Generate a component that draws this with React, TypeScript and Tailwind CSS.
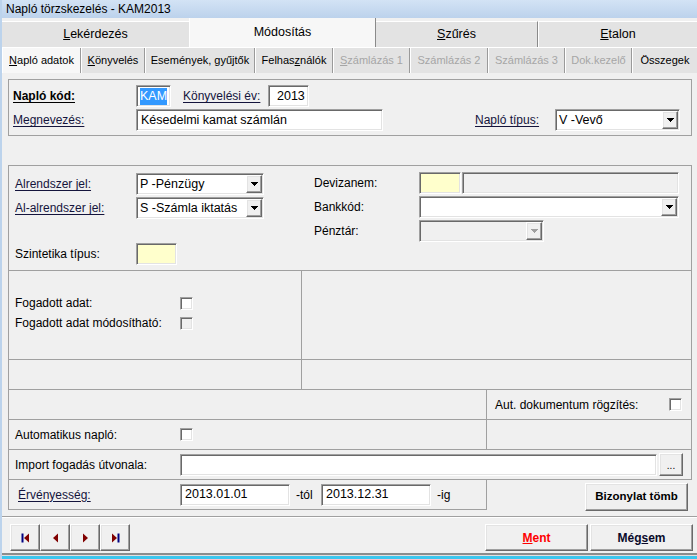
import React from "react";

const sunken =
  "border border-t-[#a0a0a0] border-l-[#a0a0a0] border-r-white border-b-white shadow-[inset_1px_1px_0_#696969,inset_-1px_-1px_0_#e3e3e3]";
const raised =
  "border border-t-white border-l-white border-r-[#696969] border-b-[#696969] shadow-[inset_-1px_-1px_0_#a0a0a0,inset_1px_1px_0_#e3e3e3]";
const lbl = "underline underline-offset-2 text-[#14143c]";

function Arrow({ color = "#000" }: { color?: string }) {
  return (
    <svg width="7" height="4" viewBox="0 0 7 4" shapeRendering="crispEdges">
      <path d="M0 0h7v1H0z M1 1h5v1H1z M2 2h3v1H2z M3 3h1v1H3z" fill={color} />
    </svg>
  );
}

function Combo({ className, value, disabled }: { className: string; value?: string; disabled?: boolean }) {
  return (
    <div className={`${sunken} ${className} h-[22px] flex items-center ${disabled ? "bg-[#f0f0f0]" : "bg-white"}`}>
      <span className="flex-1 pl-[3px] text-[12.5px] whitespace-nowrap overflow-hidden">{value}</span>
      <div className={`${raised} w-[16px] h-[18px] mr-[1px] bg-[#f0f0f0] flex items-center justify-center`}>
        <Arrow color={disabled ? "#a0a0a0" : "#000"} />
      </div>
    </div>
  );
}

function Field({
  className,
  children,
  bg = "bg-white",
}: {
  className: string;
  children?: React.ReactNode;
  bg?: string;
}) {
  return (
    <div className={`${sunken} ${bg} ${className} h-[22px] flex items-center text-[12.5px] whitespace-nowrap`}>
      {children}
    </div>
  );
}

function Check({ disabled }: { disabled?: boolean }) {
  return <div className={`${sunken} w-[13px] h-[13px] ${disabled ? "bg-[#f0f0f0]" : "bg-white"}`} />;
}

function Btn({ className, children }: { className: string; children?: React.ReactNode }) {
  return <div className={`${raised} bg-[#f0f0f0] flex items-center justify-center ${className}`}>{children}</div>;
}

function NavIcon({ kind }: { kind: "first" | "prev" | "next" | "last" }) {
  const navy = "#000080";
  const red = "#800000";
  return (
    <svg width="9" height="10" viewBox="0 0 9 10">
      {kind === "first" && (
        <>
          <rect x="0.5" y="0.5" width="2" height="9" fill={navy} />
          <polygon points="8,0.5 8,9.5 3,5" fill={red} />
        </>
      )}
      {kind === "prev" && <polygon points="7,0.5 7,9.5 2,5" fill={red} />}
      {kind === "next" && <polygon points="2,0.5 2,9.5 7,5" fill={red} />}
      {kind === "last" && (
        <>
          <polygon points="1,0.5 1,9.5 6,5" fill={red} />
          <rect x="6.5" y="0.5" width="2" height="9" fill={navy} />
        </>
      )}
    </svg>
  );
}

const tab2 = "h-[25px] flex items-center justify-center text-[11px] border-l border-l-white border-r border-r-[#9a9a9a] whitespace-nowrap";

export default function App() {
  return (
    <div className="w-[697px] h-[559px] flex flex-col bg-[#f0f0f0] border-l-2 border-l-[#bcd3ec] overflow-hidden font-['Liberation_Sans',Arial,sans-serif] text-[12px] text-black">
      {/* title bar */}
      <div className="h-[18px] bg-linear-to-b from-[#d3e3f5] to-[#bcd2ec] flex items-center pl-[4px] text-[12px] text-black">
        Napló törzskezelés - KAM2013
      </div>

      {/* top tabs */}
      <div className="h-[29px] flex items-end">
        <div className="w-[187px] h-[26px] bg-[#e3e3e3] border-t border-t-white flex items-center justify-center text-[12.5px]">
          <span>
            <u>L</u>ekérdezés
          </span>
        </div>
        <div className="w-[187px] h-[29px] bg-[#f7f7f7] border-l border-l-white border-r border-r-[#8a8a8a] flex items-center justify-center text-[12.5px]">
          Módosítás
        </div>
        <div className="w-[162px] h-[26px] bg-[#e3e3e3] border-t border-t-white border-r border-r-[#8a8a8a] flex items-center justify-center text-[12.5px]">
          <span>
            <u>S</u>zűrés
          </span>
        </div>
        <div className="flex-1 h-[26px] bg-[#e3e3e3] border-t border-t-white border-l border-l-white flex items-center justify-center text-[12.5px]">
          <span>
            <u>E</u>talon
          </span>
        </div>
      </div>

      {/* second tabs */}
      <div className="h-[26px] flex border-t border-t-white">
        <div className={`${tab2} w-[79px] bg-[#f7f7f7]`}>
          <span>
            <u>N</u>apló adatok
          </span>
        </div>
        <div className={`${tab2} w-[64px] bg-[#e3e3e3]`}>
          <span>
            <u>K</u>önyvelés
          </span>
        </div>
        <div className={`${tab2} w-[110px] bg-[#e3e3e3]`}>Események, gyűjtők</div>
        <div className={`${tab2} w-[78px] bg-[#e3e3e3]`}>
          <span>
            Felhas<u>z</u>nálók
          </span>
        </div>
        <div className={`${tab2} w-[77px] bg-[#e3e3e3] text-[#a6a6a6]`}>
          <span>
            <u>S</u>zámlázás 1
          </span>
        </div>
        <div className={`${tab2} w-[78px] bg-[#e3e3e3] text-[#a6a6a6]`}>Számlázás 2</div>
        <div className={`${tab2} w-[77px] bg-[#e3e3e3] text-[#a6a6a6]`}>Számlázás 3</div>
        <div className={`${tab2} w-[67px] bg-[#e3e3e3] text-[#a6a6a6]`}>Dok.kezelő</div>
        <div className={`${tab2} flex-1 bg-[#e3e3e3] border-r-0`}>Összegek</div>
      </div>

      {/* content */}
      <div className="pl-[6px] flex flex-col">
        {/* panel 1 */}
        <div className="mt-[6px] w-[684px] h-[57px] border border-[#a0a0a0] pt-[5px] pl-[4px] flex flex-col gap-[2px]">
          <div className="flex items-center h-[22px]">
            <span className="w-[123px] font-bold underline underline-offset-2">Napló kód:</span>
            <Field className="w-[35px] pl-[3px]">
              <span className="bg-[#3399ff] text-white leading-[17px]">KAM</span>
            </Field>
            <span className={`ml-[12px] w-[85px] ${lbl}`}>Könyvelési év:</span>
            <Field className="w-[41px] pl-[8px]">2013</Field>
          </div>
          <div className="flex items-center h-[22px]">
            <span className={`w-[123px] ${lbl}`}>Megnevezés:</span>
            <Field className="w-[247px] pl-[4px]">Késedelmi kamat számlán</Field>
            <span className={`ml-[92px] w-[80px] ${lbl}`}>Napló típus:</span>
            <Combo className="w-[125px]" value="V -Vevő" />
          </div>
        </div>

        {/* panel 2 */}
        <div className="mt-[29px] w-[684px] h-[315px] border border-[#a0a0a0] flex flex-col">
          {/* section A */}
          <div className="h-[105px] border-b border-[#a0a0a0] flex">
            <div className="w-[292px] pl-[6px] pt-[7px] flex flex-col">
              <div className="flex items-center h-[22px]">
                <span className={`w-[121px] ${lbl}`}>Alrendszer jel:</span>
                <Combo className="w-[128px]" value="P -Pénzügy" />
              </div>
              <div className="flex items-center h-[22px] mt-[2px]">
                <span className={`w-[121px] ${lbl}`}>Al-alrendszer jel:</span>
                <Combo className="w-[128px]" value="S -Számla iktatás" />
              </div>
              <div className="flex items-center h-[22px] mt-[24px]">
                <span className="w-[121px]">Szintetika típus:</span>
                <Field className="w-[41px]" bg="bg-[#ffffcc]" />
              </div>
            </div>
            <div className="flex-1 pl-[13px] pt-[6px] flex flex-col gap-[2px]">
              <div className="flex items-center h-[22px]">
                <span className="w-[105px]">Devizanem:</span>
                <Field className="w-[42px]" bg="bg-[#ffffcc]" />
                <Field className="w-[217px] ml-[1px]" bg="bg-[#f0f0f0]" />
              </div>
              <div className="flex items-center h-[22px]">
                <span className="w-[105px]">Bankkód:</span>
                <Combo className="w-[260px]" value="" />
              </div>
              <div className="flex items-center h-[22px]">
                <span className="w-[105px]">Pénztár:</span>
                <Combo className="w-[125px]" value="" disabled />
              </div>
            </div>
          </div>

          {/* section B1 */}
          <div className="h-[89px] border-b border-[#a0a0a0] flex">
            <div className="w-[293px] border-r border-[#a0a0a0] pl-[6px] pt-[22px] flex flex-col">
              <div className="h-[20px] flex items-center">
                <span className="w-[165px]">Fogadott adat:</span>
                <Check />
              </div>
              <div className="h-[20px] flex items-center">
                <span className="w-[165px]">Fogadott adat módosítható:</span>
                <Check disabled />
              </div>
            </div>
            <div className="flex-1" />
          </div>

          {/* section B2 */}
          <div className="h-[30px] border-b border-[#a0a0a0] flex">
            <div className="w-[293px] border-r border-[#a0a0a0]" />
            <div className="flex-1" />
          </div>

          {/* section C1 */}
          <div className="h-[30px] border-b border-[#a0a0a0] flex">
            <div className="w-[478px] border-r border-[#a0a0a0]" />
            <div className="flex-1 flex items-center pl-[8px]">
              <span className="w-[174px]">Aut. dokumentum rögzítés:</span>
              <Check />
            </div>
          </div>

          {/* section C2 */}
          <div className="h-[30px] border-b border-[#a0a0a0] flex">
            <div className="w-[478px] border-r border-[#a0a0a0] flex items-center pl-[6px]">
              <span className="w-[165px]">Automatikus napló:</span>
              <Check />
            </div>
            <div className="flex-1" />
          </div>

          {/* import row */}
          <div className="flex-1 flex items-center pl-[6px]">
            <span className="w-[165px]">Import fogadás útvonala:</span>
            <Field className="w-[477px]" />
            <Btn className="ml-[2px] w-[24px] h-[23px] items-end pb-[4px] text-[10px] leading-none">...</Btn>
          </div>
        </div>

        {/* validity row */}
        <div className="flex h-[30px]">
          <div className="w-[479px] border border-t-0 border-[#a0a0a0] flex items-center pl-[9px]">
            <span className={`w-[162px] ${lbl}`}>Érvényesség:</span>
            <Field className="w-[110px] pl-[4px]">2013.01.01</Field>
            <span className="w-[31px] pl-[6px]">-tól</span>
            <Field className="w-[110px] pl-[4px]">2013.12.31</Field>
            <span className="pl-[6px]">-ig</span>
          </div>
          <div className="flex-1 flex justify-end pr-[9px] pt-[3px]">
            <Btn className="w-[103px] h-[28px] font-bold text-[11.5px]">Bizonylat tömb</Btn>
          </div>
        </div>
      </div>

      {/* divider */}
      <div className="mt-[6px] h-[2px] border-t border-t-[#a0a0a0] border-b border-b-white" />

      {/* bottom bar */}
      <div className="h-[37px] flex pt-[6px] pl-[8px] pr-[4px] border-b-2 border-b-[#8c8c8c]">
        <div className="flex h-[27px]">
          <Btn className="w-[30px] h-[27px]">
            <NavIcon kind="first" />
          </Btn>
          <Btn className="w-[30px] h-[27px]">
            <NavIcon kind="prev" />
          </Btn>
          <Btn className="w-[30px] h-[27px]">
            <NavIcon kind="next" />
          </Btn>
          <Btn className="w-[30px] h-[27px]">
            <NavIcon kind="last" />
          </Btn>
        </div>
        <div className="ml-auto flex gap-[2px] h-[27px]">
          <Btn className="w-[103px] h-[27px] font-bold text-[12px] text-[#ff0000]">
            <span>
              <u>M</u>ent
            </span>
          </Btn>
          <Btn className="w-[103px] h-[27px] font-bold text-[12px] text-[#0a0a2a]">
            <span>
              Még<u>s</u>em
            </span>
          </Btn>
        </div>
      </div>
      <div className="h-[1px] bg-[#e0e0e0]" />
      <div className="flex-1 bg-[#3cc6ee]" />
    </div>
  );
}
